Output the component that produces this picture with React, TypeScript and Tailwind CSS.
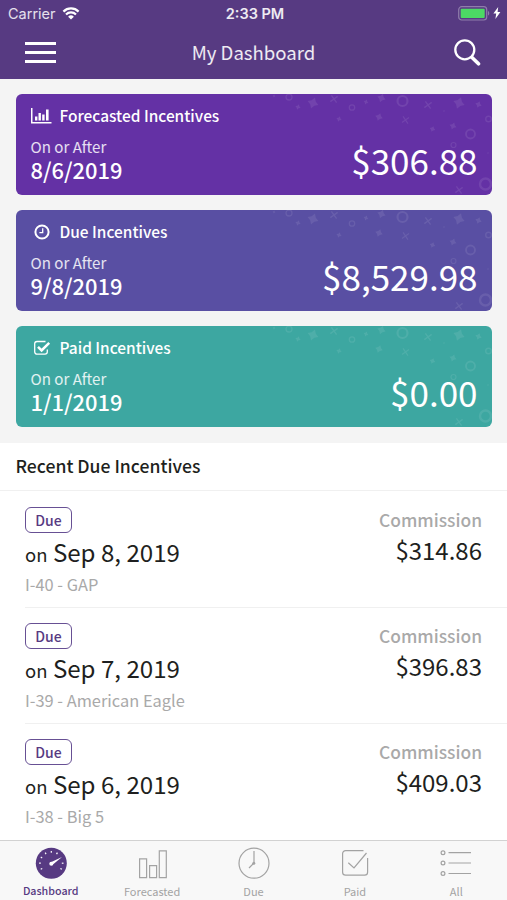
import type { ReactNode } from 'react';

const cards = [
  { title: 'Forecasted Incentives', date: '8/6/2019', amount: '$306.88', color: 'bg-[#6431a5]', icon: <ChartIcon /> },
  { title: 'Due Incentives', date: '9/8/2019', amount: '$8,529.98', color: 'bg-[#594fa3]', icon: <ClockIcon /> },
  { title: 'Paid Incentives', date: '1/1/2019', amount: '$0.00', color: 'bg-[#3da7a1]', icon: <CheckIcon /> },
];

const incentives = [
  { date: 'Sep 8, 2019', name: 'I-40 - GAP', amount: '$314.86' },
  { date: 'Sep 7, 2019', name: 'I-39 - American Eagle', amount: '$396.83' },
  { date: 'Sep 6, 2019', name: 'I-38 - Big 5', amount: '$409.03' },
];

function ChartIcon() {
  return (
    <svg width="21" height="16" viewBox="0 0 21 16" fill="currentColor">
      <path d="M0 0h1.500v14H20.500v1.500H0z" />
      <path d="M4 8.500h2.400v4H4zM7.500 5h2.400v7.500H7.500zM11.200 6.500h2.400v6h-2.400zM15 1.500h2.600v11h-2.600z" />
    </svg>
  );
}

function ClockIcon() {
  return (
    <svg className="ml-[3px]" width="16" height="16" viewBox="0 0 16 16" fill="none" stroke="currentColor">
      <circle cx="8" cy="8" r="6.600" strokeWidth="2" />
      <path d="M8.700 4.300v4.400H5.400" strokeWidth="1.300" />
    </svg>
  );
}

function CheckIcon() {
  return (
    <svg className="ml-[3px]" width="17" height="16" viewBox="0 0 17 16" fill="none" stroke="currentColor">
      <path d="M13.300 9.500v2.300a2.300 2.300 0 0 1-2.300 2.300H3a2.300 2.300 0 0 1-2.300-2.300V3.800A2.300 2.300 0 0 1 3 1.500h8.500" strokeWidth="1.300" />
      <path d="m4 6.800 3.600 3.600 7.600-7.600" strokeWidth="2.500" />
    </svg>
  );
}

// Confetti in the top right corner of each card
function Confetti() {
  const rings = [
    [20, 3, 3, 1.3],
    [83, 13.5, 2.7, 1.3],
    [133.5, 7, 5, 2.2],
    [219.5, 25, 2.8, 1.4],
    [201.5, 40, 4.5, 1.9],
    [184.5, 51, 2.5, 1.2],
    [216.5, 90, 5.5, 2.5],
  ];
  const stars = [
    [29, 13, 2.8],
    [44, 9, 5.8],
    [97, 8, 2.6],
    [112.5, 4, 4.4],
    [110, 23, 4],
    [70, 25, 2.8],
    [190, 9, 6],
    [209.5, 10.5, 3.4],
    [184, 32, 3.8],
    [163.5, 35, 3],
    [5, 2, 1.5],
    [175, 17, 1],
    [219, 59, 1],
  ];
  const crosses = [
    [65, 5, 4],
    [136.5, 26, 3.8],
    [159, 11, 4],
    [190, 96, 4],
  ];
  return (
    <svg className="absolute top-0 right-0 text-white/9" width="223" height="101" viewBox="0 0 223 101" fill="none" stroke="currentColor">
      {rings.map(([x, y, r, w]) => (
        <circle key={`${x}-${y}`} cx={x} cy={y} r={r} strokeWidth={w} />
      ))}
      {stars.map(([x, y, r]) => (
        <path
          key={`${x}-${y}`}
          transform={`translate(${x} ${y}) rotate(20) scale(${r})`}
          d="M0-1 .38-.38 1 0 .38.38 0 1-.38.38-1 0-.38-.38z"
          fill="currentColor"
          stroke="none"
        />
      ))}
      {crosses.map(([x, y, r]) => (
        <path
          key={`${x}-${y}`}
          transform={`translate(${x} ${y}) rotate(10) scale(${r})`}
          d="M-.8-.8.8.8M.8-.8-.8.8"
          strokeWidth={0.35}
        />
      ))}
    </svg>
  );
}

function StatusBar() {
  return (
    <div className="flex h-7 items-center justify-between pr-[6px] pl-2 font-['Inter',sans-serif]">
      <div className="flex w-40 items-center gap-[6.5px]">
        <span className="text-[14.5px] leading-7 text-white/85">Carrier</span>
        <svg className="mb-0.5" width="18" height="13" viewBox="0 0 17 13" fill="none" stroke="#fff" strokeWidth="2.2">
          <path d="M.9 4.600a10.800 10.800 0 0 1 15.200 0M3.500 7.500a7.100 7.100 0 0 1 10 0" />
          <path d="M8.500 12.600 5.600 9.700a4.100 4.100 0 0 1 5.800 0z" fill="#fff" stroke="none" />
        </svg>
      </div>
      <span className="pl-px text-[14.5px] leading-7 font-semibold text-white/90">2:33 PM</span>
      <div className="flex w-40 items-center justify-end gap-[3.5px]">
        <svg className="mb-px" width="32" height="15" viewBox="0 0 32 15">
          <rect x=".7" y=".7" width="28" height="13.300" rx="3" fill="none" stroke="#8f7dab" strokeWidth="1.200" />
          <rect x="2.700" y="2.700" width="24" height="9.300" rx="1" fill="#4cd964" />
          <path d="M30 5v4.600c1.700-.6 1.700-4 0-4.600z" fill="#8f7dab" />
        </svg>
        <svg className="mb-0.5" width="8" height="12" viewBox="0 0 8 12" fill="#fff">
          <path d="M5.200 0 .4 6.600h2.800L2.400 12l5-7H4.600z" />
        </svg>
      </div>
    </div>
  );
}

function Header() {
  return (
    <header className="h-[79px] shrink-0 bg-[#573a82]">
      <StatusBar />
      <div className="flex h-[48px] items-center justify-between pr-[26px] pl-[25px]">
        <div className="flex w-[31px] flex-col gap-[6px]">
          <div className="h-[3px] bg-white" />
          <div className="h-[3px] bg-white" />
          <div className="h-[3px] bg-white" />
        </div>
        <h1 className="mr-[3px] mb-px text-[18.6px] leading-6 text-white/90">My Dashboard</h1>
        <svg width="27" height="27" viewBox="0 0 27 27" fill="none" stroke="#fff">
          <circle cx="10.800" cy="10.800" r="9.500" strokeWidth="2.300" />
          <path d="m18 18.500 6.500 6.300" strokeWidth="3.600" strokeLinecap="round" />
        </svg>
      </div>
    </header>
  );
}

function Tab({ label, active, children }: { label: string; active?: boolean; children: ReactNode }) {
  return (
    <div className={active ? 'flex flex-1 flex-col items-center pt-[5px] text-[#573a82]' : 'flex flex-1 flex-col items-center pt-[5px] text-[#a3a3a3]'}>
      <svg width="34" height="34" viewBox="0 0 34 34" fill="none" stroke="currentColor" strokeWidth="1.2">
        {children}
      </svg>
      <span className={active ? 'mt-[3px] text-[10.7px] leading-4 font-medium' : 'mt-[3px] text-[11px] leading-4'}>{label}</span>
    </div>
  );
}

function TabBar() {
  return (
    <nav className="flex h-[60px] shrink-0 border-t border-[#d2d2d2] bg-[#f8f8f8]">
      <Tab label="Dashboard" active>
        <circle cx="17.300" cy="17.200" r="15.500" fill="currentColor" stroke="none" />
        {[-120, -90, -60, -30, 0, 30, 90, 120].map((angle) => (
          <path key={angle} d="M17.300 5v1.700" transform={`rotate(${angle} 17.3 17.2)`} stroke="#fff" />
        ))}
        <path d="m16.300 16.400 11.700-5.400-10 8.200z" fill="#fff" stroke="none" />
        <circle cx="17.300" cy="17.700" r="2" fill="#fff" stroke="none" />
      </Tab>
      <Tab label="Forecasted">
        <path d="M4.600 12.800h7v18.800h-7zM14.600 19.600h7v12h-7zM24.300 4.800h7v26.800h-7z" />
      </Tab>
      <Tab label="Due">
        <circle cx="17" cy="17.200" r="15" />
        <path d="M17 5v12l-5 5" />
        <circle cx="16.800" cy="17.200" r="1.500" fill="currentColor" stroke="none" />
      </Tab>
      <Tab label="Paid">
        <path d="M25.500 4.600H7.600a3 3 0 0 0-3 3v18.600a3 3 0 0 0 3 3h19a3 3 0 0 0 3-3V12M10.300 16.800l5.700 5.200L28.500 7" />
      </Tab>
      <Tab label="All">
        <path d="M9.500 6.700H32M9.500 17H32M9.500 27.500H32" />
        <circle cx="4" cy="6.700" r="1.900" />
        <circle cx="4" cy="17" r="1.900" />
        <circle cx="4" cy="27.500" r="1.900" />
      </Tab>
    </nav>
  );
}

export default function App() {
  return (
    <div className="flex h-[900px] w-[507px] flex-col overflow-hidden bg-white font-['Noto_Sans_CJK_SC',sans-serif] text-[#1e1f20]">
      <Header />
      <section className="flex h-[364px] shrink-0 flex-col gap-[15px] bg-[#f4f4f4] px-[15.5px] pt-[15px]">
        {cards.map((card) => (
          <div key={card.title} className={`relative flex h-[101px] justify-between overflow-hidden rounded-md pr-[14px] pl-[15px] text-white ${card.color}`}>
            <Confetti />
            <div className="pt-[11px]">
              <div className="flex h-[22px] items-center">
                <span className="flex w-[29px] items-center pl-[0.5px]">{card.icon}</span>
                <h2 className="mb-0.5 text-[15.45px] leading-5 font-medium">{card.title}</h2>
              </div>
              <p className="mt-[9px] text-[15.1px] leading-5 text-white/85">On or After</p>
              <p className="mt-0.5 text-[21.9px] leading-6 font-medium">{card.date}</p>
            </div>
            <p className="relative mt-[41px] text-[35px] leading-[50px]">{card.amount}</p>
          </div>
        ))}
      </section>
      <section className="min-h-0 flex-1 overflow-hidden">
        <h2 className="mb-px h-[48px] border-b border-[#f0f0f0] pl-[15.5px] text-[17.6px] leading-[45px] font-medium">Recent Due Incentives</h2>
        {incentives.map((item) => (
          <div key={item.name} className="ml-[25px] flex h-[116px] justify-between border-b border-[#f0f0f0] pt-[15px] pr-[25px] last:border-b-0">
            <div>
              <span className="flex h-[26px] w-[47px] items-center justify-center rounded-md border border-[#675094] text-[14px] leading-5 font-medium text-[#573a82]">Due</span>
              <p className="mt-[3px] text-[24.1px] leading-8">
                <span className="text-[18.5px]">on</span> {item.date}
              </p>
              <p className="mt-0.5 text-[16.4px] leading-6 text-[#a9a9a9]">{item.name}</p>
            </div>
            <div className="text-right">
              <p className="mt-px text-[17.4px] leading-6 font-medium text-[#a9a9a9]">Commission</p>
              <p className="mt-0.5 text-[24px] leading-8">{item.amount}</p>
            </div>
          </div>
        ))}
      </section>
      <TabBar />
    </div>
  );
}
